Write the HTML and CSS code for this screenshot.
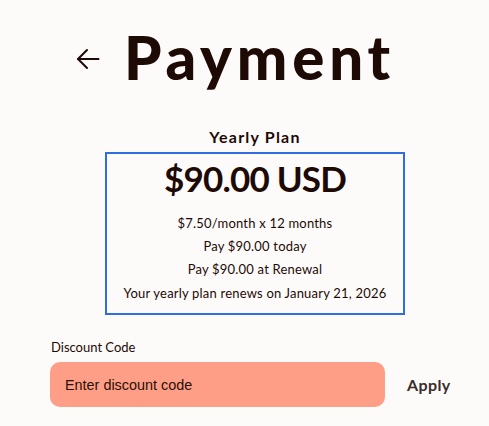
FILE: index.html
```html
<!DOCTYPE html>
<html lang="en">
<head>
<meta charset="utf-8">
<title>Payment</title>
<link rel="stylesheet" href="styles.css">
</head>
<body>
<main class="page">
  <header class="header">
    <button class="back" aria-label="Back">
      <svg width="24" height="22" viewBox="0 0 24 22" fill="none" stroke="#1e0a05" stroke-width="2" stroke-linecap="round" stroke-linejoin="round">
        <path d="M22.5 11H2"/>
        <path d="M11 2l-9 9 9 9"/>
      </svg>
    </button>
    <h1 class="title">Payment</h1>
  </header>

  <section class="plan">
    <h2 class="plan-name">Yearly Plan</h2>
    <div class="plan-box">
      <div class="price">$90.00 USD</div>
      <p class="line">$7.50/month x 12 months</p>
      <p class="line">Pay $90.00 today</p>
      <p class="line">Pay $90.00 at Renewal</p>
      <p class="line">Your yearly plan renews on January 21, 2026</p>
    </div>
  </section>

  <section class="discount">
    <label class="discount-label" for="code">Discount Code</label>
    <div class="discount-row">
      <input id="code" class="discount-input" type="text" placeholder="Enter discount code">
      <button class="apply">Apply</button>
    </div>
  </section>
</main>
</body>
</html>
```

FILE: styles.css
```css
html, body {
  margin: 0;
  padding: 0;
  background: #fdfbfa;
}
body {
  font-family: "Lato", "Liberation Sans", sans-serif;
  color: #1e0a05;
}
.page {
  width: 489px;
  height: 426px;
  overflow: hidden;
}
.header {
  display: flex;
  align-items: center;
  gap: 24px;
  padding: 25px 0 0 76px;
  height: 88px;
  box-sizing: border-box;
}
.back {
  border: 0;
  background: none;
  padding: 0;
  width: 24px;
  height: 22px;
  display: flex;
  margin-top: 5px;
}
.title {
  margin: 0;
  font-size: 60px;
  font-weight: 900;
  letter-spacing: 4.8px;
  line-height: 1;
}
.plan {
  width: 300px;
  margin: 40px 0 0 105px;
}
.plan-name {
  margin: 0 0 6px;
  text-align: center;
  font-size: 16px;
  font-weight: 700;
  letter-spacing: 1.2px;
  line-height: 18px;
}
.plan-box {
  border: 2px solid #2f6de1;
  box-sizing: border-box;
  height: 163px;
  text-align: center;
  padding-top: 4px;
}
.price {
  font-size: 35px;
  font-weight: 700;
  letter-spacing: -0.8px;
  line-height: 40px;
  margin-bottom: 14px;
}
.line {
  margin: 0;
  font-size: 13px;
  letter-spacing: 0.2px;
  line-height: 23px;
}
.line:last-child {
  margin-top: 1px;
}
.discount {
  padding: 24px 0 0 51px;
}
.discount-label {
  display: block;
  font-size: 13px;
  line-height: 16px;
  margin-bottom: 7px;
}
.discount-row {
  display: flex;
  align-items: center;
  gap: 22px;
  margin-left: -1px;
}
.discount-input {
  width: 335px;
  height: 45px;
  box-sizing: border-box;
  border: 0;
  border-radius: 10px;
  background: #ff9e86;
  padding: 0 15px;
  font-family: "Liberation Sans", Arial, sans-serif;
  font-size: 14.4px;
  color: #1e0a05;
  outline: none;
}
.discount-input::placeholder {
  color: #2a0f08;
  opacity: 1;
}
.apply {
  border: 0;
  background: none;
  padding: 0;
  font-family: "Lato", "Liberation Sans", sans-serif;
  font-size: 16px;
  font-weight: 700;
  letter-spacing: 0.4px;
  color: #3b2e2a;
}
```
